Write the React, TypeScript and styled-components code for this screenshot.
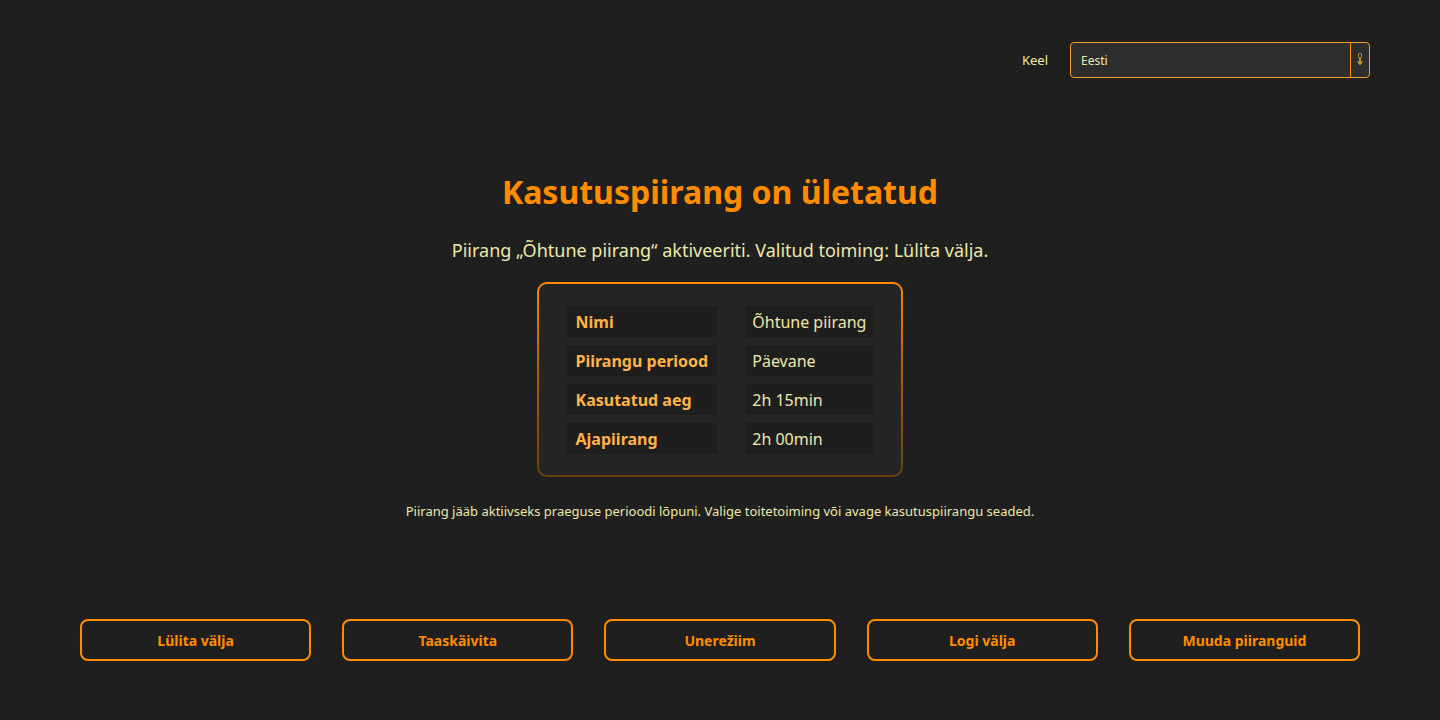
import React from "react";
import styled, { createGlobalStyle } from "styled-components";

const GlobalStyle = createGlobalStyle`
  html, body {
    margin: 0;
    padding: 0;
    background: #1f1f1f;
  }
  body {
    font-family: "Segoe UI", "Noto Sans", "Open Sans", sans-serif;
  }
`;

const Page = styled.div`
  width: 1440px;
  height: 720px;
  box-sizing: border-box;
  display: flex;
  flex-direction: column;
  background: #1f1f1f;
  color: #eee8aa;
`;

const TopBar = styled.div`
  display: flex;
  justify-content: flex-end;
  align-items: center;
  gap: 22px;
  padding: 42px 70px 0 0;
`;

const Label = styled.label`
  font-size: 13px;
  color: #eee8aa;
`;

const SelectBox = styled.div`
  width: 300px;
  height: 36px;
  box-sizing: border-box;
  display: flex;
  border: 1px solid #f5a030;
  border-radius: 4px;
  background: #2d2d2d;
`;

const SelectValue = styled.div`
  flex: 1;
  display: flex;
  align-items: center;
  padding-left: 10px;
  font-size: 12px;
  color: #eee8aa;
`;

const SelectArrow = styled.div`
  width: 18px;
  border-left: 1px solid #ff8c00;
  display: flex;
  align-items: center;
  justify-content: center;
`;

const Main = styled.main`
  display: flex;
  flex-direction: column;
  align-items: center;
  padding-top: 92px;
`;

const Title = styled.h1`
  margin: 0;
  font-size: 32px;
  font-weight: 700;
  line-height: 44px;
  color: #ff8c00;
`;

const Subtitle = styled.p`
  margin: 24px 0 0;
  font-size: 18px;
  line-height: 24px;
  color: #eee8aa;
`;

const Card = styled.div`
  margin-top: 20px;
  padding: 14px 0 13px;
  border: 2px solid transparent;
  border-radius: 10px;
  background:
    linear-gradient(#252525, #252525) padding-box,
    linear-gradient(180deg, #ff8c00 0%, #a86010 45%, #6a4212 100%) border-box;
`;

const InfoTable = styled.table`
  border-spacing: 28px 8px;
  border-collapse: separate;
`;

const Cell = styled.td<{ $head?: boolean }>`
  background: #1e1e1e;
  height: 31px;
  padding: ${(p) => (p.$head ? "0 9px" : "0 7px")};
  font-size: 16px;
  white-space: nowrap;
  font-weight: ${(p) => (p.$head ? 700 : 400)};
  color: ${(p) => (p.$head ? "#ffb347" : "#eee8aa")};
`;

const Note = styled.p`
  margin: 25px 0 0;
  font-size: 13px;
  color: #eee8aa;
`;

const ButtonRow = styled.div`
  margin-top: auto;
  margin-bottom: 59px;
  display: flex;
  gap: 31px;
  padding: 0 80px;
`;

const ActionButton = styled.button`
  flex: 1;
  height: 42px;
  border: 2px solid #ff8c00;
  border-radius: 8px;
  background: transparent;
  color: #ff8c00;
  font-family: inherit;
  font-size: 14px;
  font-weight: 700;
  cursor: pointer;
  &:hover {
    background: rgba(255, 140, 0, 0.08);
  }
`;

const rows = [
  ["Nimi", "Õhtune piirang"],
  ["Piirangu periood", "Päevane"],
  ["Kasutatud aeg", "2h 15min"],
  ["Ajapiirang", "2h 00min"],
];

const actions = ["Lülita välja", "Taaskäivita", "Unerežiim", "Logi välja", "Muuda piiranguid"];

const ArrowIcon = () => (
  <svg width="8" height="14" viewBox="0 0 8 14">
    <rect x="2.5" y="0.5" width="3" height="4" rx="1" fill="none" stroke="#d4a020" strokeWidth="1" />
    <path d="M4 4.5 V11" stroke="#d4a020" strokeWidth="1.6" />
    <path d="M1 8.5 L4 12.5 L7 8.5 Z" fill="#d4a020" />
  </svg>
);

export default function App() {
  return (
    <Page>
      <GlobalStyle />
      <TopBar>
        <Label>Keel</Label>
        <SelectBox>
          <SelectValue>Eesti</SelectValue>
          <SelectArrow>
            <ArrowIcon />
          </SelectArrow>
        </SelectBox>
      </TopBar>
      <Main>
        <Title>Kasutuspiirang on ületatud</Title>
        <Subtitle>Piirang „Õhtune piirang“ aktiveeriti. Valitud toiming: Lülita välja.</Subtitle>
        <Card>
          <InfoTable>
            <tbody>
              {rows.map(([k, v]) => (
                <tr key={k}>
                  <Cell $head>{k}</Cell>
                  <Cell>{v}</Cell>
                </tr>
              ))}
            </tbody>
          </InfoTable>
        </Card>
        <Note>
          Piirang jääb aktiivseks praeguse perioodi lõpuni. Valige toitetoiming või avage
          kasutuspiirangu seaded.
        </Note>
      </Main>
      <ButtonRow>
        {actions.map((a) => (
          <ActionButton key={a}>{a}</ActionButton>
        ))}
      </ButtonRow>
    </Page>
  );
}
